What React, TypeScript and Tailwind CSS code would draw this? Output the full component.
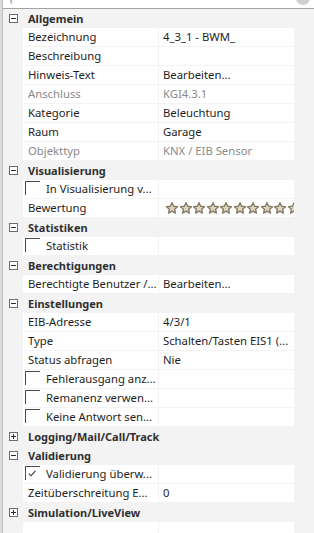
import React from "react";

type Row =
  | { kind: "cat"; label: string; open: boolean }
  | { kind: "prop"; name: string; value?: string; disabled?: boolean; stars?: boolean }
  | { kind: "check"; name: string; checked?: boolean }
  | { kind: "empty" };

const rows: Row[] = [
  { kind: "cat", label: "Allgemein", open: true },
  { kind: "prop", name: "Bezeichnung", value: "4_3_1 - BWM_" },
  { kind: "prop", name: "Beschreibung", value: "" },
  { kind: "prop", name: "Hinweis-Text", value: "Bearbeiten..." },
  { kind: "prop", name: "Anschluss", value: "KGI4.3.1", disabled: true },
  { kind: "prop", name: "Kategorie", value: "Beleuchtung" },
  { kind: "prop", name: "Raum", value: "Garage" },
  { kind: "prop", name: "Objekttyp", value: "KNX / EIB Sensor", disabled: true },
  { kind: "cat", label: "Visualisierung", open: true },
  { kind: "check", name: "In Visualisierung v..." },
  { kind: "prop", name: "Bewertung", stars: true },
  { kind: "cat", label: "Statistiken", open: true },
  { kind: "check", name: "Statistik" },
  { kind: "cat", label: "Berechtigungen", open: true },
  { kind: "prop", name: "Berechtigte Benutzer /...", value: "Bearbeiten..." },
  { kind: "cat", label: "Einstellungen", open: true },
  { kind: "prop", name: "EIB-Adresse", value: "4/3/1" },
  { kind: "prop", name: "Type", value: "Schalten/Tasten EIS1 (..." },
  { kind: "prop", name: "Status abfragen", value: "Nie" },
  { kind: "check", name: "Fehlerausgang anz..." },
  { kind: "check", name: "Remanenz verwen..." },
  { kind: "check", name: "Keine Antwort sen..." },
  { kind: "cat", label: "Logging/Mail/Call/Track", open: false },
  { kind: "cat", label: "Validierung", open: true },
  { kind: "check", name: "Validierung überw...", checked: true },
  { kind: "prop", name: "Zeitüberschreitung E...", value: "0" },
  { kind: "cat", label: "Simulation/LiveView", open: false },
  { kind: "empty" },
];

function ToggleBox({ open }: { open: boolean }) {
  return (
    <svg width="9" height="9" viewBox="0 0 9 9" className="block">
      <rect x="0.5" y="0.5" width="8" height="8" fill="#fff" stroke="#6d6d6d" />
      <line x1="2" y1="4.5" x2="7" y2="4.5" stroke="#2f2f2f" />
      {!open && <line x1="4.5" y1="2" x2="4.5" y2="7" stroke="#2f2f2f" />}
    </svg>
  );
}

function Star() {
  return (
    <svg width="12" height="12" viewBox="1.5 2 21 20" className="block shrink-0">
      <path
        d="M12 2.8l2.9 6.1 6.7.8-5 4.6 1.4 6.6L12 17.6l-6 3.3 1.4-6.6-5-4.6 6.7-.8z"
        fill="#ddd4bf"
        stroke="#857a62"
        strokeWidth="2.4"
        strokeLinejoin="round"
      />
    </svg>
  );
}

function Checkbox({ checked }: { checked?: boolean }) {
  return (
    <div className="w-[15px] h-[14px] border-t border-l border-[#4a4a4a] flex items-center pl-[2px] shrink-0">
      {checked && (
        <svg width="8" height="7" viewBox="0 0 8 7" className="block">
          <polyline points="0.8,3.6 3,5.8 7.4,0.8" fill="none" stroke="#333" strokeWidth="1.1" />
        </svg>
      )}
    </div>
  );
}

function GridRow({ row }: { row: Row }) {
  if (row.kind === "cat") {
    return (
      <div className="h-[19px] flex items-center">
        <div className="w-[20px] flex items-center pl-[6px]">
          <ToggleBox open={row.open} />
        </div>
        <div className="pl-[5px] font-bold text-[11px] text-[#303030] whitespace-nowrap">{row.label}</div>
      </div>
    );
  }
  const muted = row.kind === "prop" && row.disabled;
  const nameCell =
    row.kind === "check" ? (
      <div className="w-[135px] h-[18px] bg-white flex pl-[2px] text-[#1e1e1e] overflow-hidden whitespace-nowrap">
        <div className="mt-[1px]">
          <Checkbox checked={row.checked} />
        </div>
        <span className="pl-[6px] self-center">{row.name}</span>
      </div>
    ) : (
      <div
        className={`w-[135px] h-[18px] bg-white flex items-center pl-[5px] overflow-hidden whitespace-nowrap ${
          muted ? "text-[#8a8a8a]" : "text-[#1e1e1e]"
        }`}
      >
        {row.kind === "prop" ? row.name : ""}
      </div>
    );

  return (
    <div className="h-[19px] flex items-start">
      <div className="w-[20px]" />
      {nameCell}
      <div className="w-[1px]" />
      <div
        className={`w-[135px] h-[18px] bg-white flex items-center pl-[4px] overflow-hidden whitespace-nowrap ${
          muted ? "text-[#8a8a8a]" : "text-[#1e1e1e]"
        }`}
      >
        {row.kind === "prop" && row.stars ? (
          <div className="flex gap-[1.5px] pl-[3px]">
            {Array.from({ length: 10 }).map((_, i) => (
              <Star key={i} />
            ))}
          </div>
        ) : row.kind === "prop" ? (
          row.value
        ) : null}
      </div>
    </div>
  );
}

export default function App() {
  return (
    <div
      className="w-[314px] h-[533px] overflow-hidden bg-[#f3f3f3] flex text-[11.3px] leading-none"
      style={{ fontFamily: '"Segoe UI", "Noto Sans", sans-serif' }}
    >
      {/* left frame edge */}
      <div className="w-[3px] bg-[#dcdcdc] border-r border-[#bdbdbd] shrink-0" />

      <div className="flex-1 flex flex-col">
        {/* top toolbar remnant */}
        <div className="relative h-[9px] bg-white border-b border-[#a3a3a3] shrink-0">
          <div className="absolute left-[7px] top-0 w-[3px] h-[4px] rounded-bl-full border-l-2 border-[#b8b8b8]" />
          <div className="absolute left-[293px] top-[-9px] w-[14px] h-[14px] rounded-full bg-[#cfcfcf]" />
        </div>

        <div className="flex flex-col">
          {rows.map((r, i) => (
            <GridRow key={i} row={r} />
          ))}
        </div>
      </div>
    </div>
  );
}
